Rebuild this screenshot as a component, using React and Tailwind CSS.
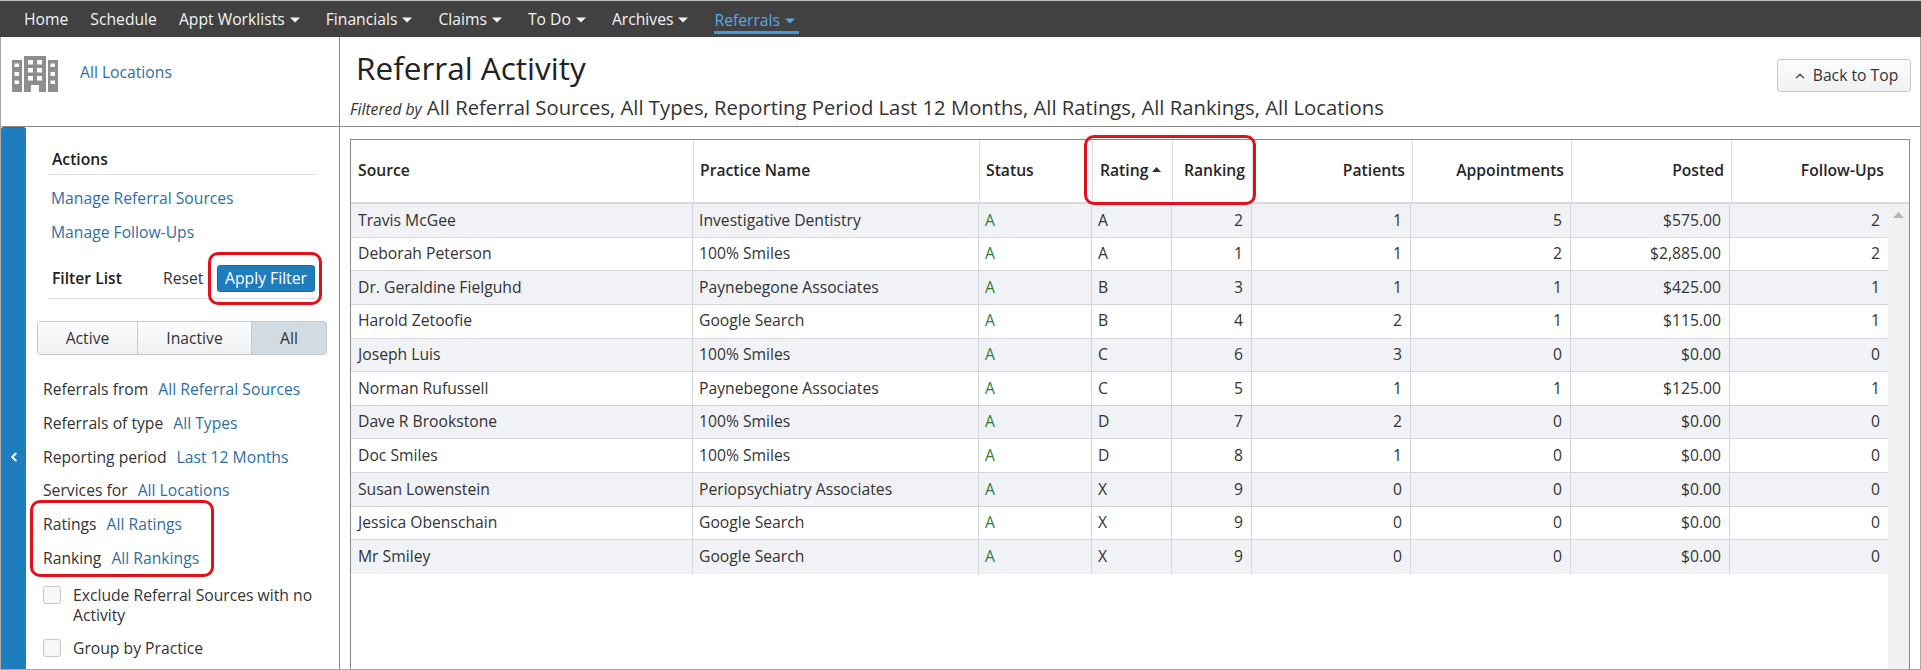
import React from "react";
import { ChevronLeft, ChevronUp } from "lucide-react";

const rows = [
  ["Travis McGee", "Investigative Dentistry", "A", "A", "2", "1", "5", "$575.00", "2"],
  ["Deborah Peterson", "100% Smiles", "A", "A", "1", "1", "2", "$2,885.00", "2"],
  ["Dr. Geraldine Fielguhd", "Paynebegone Associates", "A", "B", "3", "1", "1", "$425.00", "1"],
  ["Harold Zetoofie", "Google Search", "A", "B", "4", "2", "1", "$115.00", "1"],
  ["Joseph Luis", "100% Smiles", "A", "C", "6", "3", "0", "$0.00", "0"],
  ["Norman Rufussell", "Paynebegone Associates", "A", "C", "5", "1", "1", "$125.00", "1"],
  ["Dave R Brookstone", "100% Smiles", "A", "D", "7", "2", "0", "$0.00", "0"],
  ["Doc Smiles", "100% Smiles", "A", "D", "8", "1", "0", "$0.00", "0"],
  ["Susan Lowenstein", "Periopsychiatry Associates", "A", "X", "9", "0", "0", "$0.00", "0"],
  ["Jessica Obenschain", "Google Search", "A", "X", "9", "0", "0", "$0.00", "0"],
  ["Mr Smiley", "Google Search", "A", "X", "9", "0", "0", "$0.00", "0"],
];

function Caret({ className }) {
  return (
    <svg width="10" height="6" viewBox="0 0 10 6" className={className}>
      <path d="M0 0.5H10L5 5.5Z" fill="currentColor" />
    </svg>
  );
}

function NavItem({ label, menu, active }) {
  return (
    <div className={active ? "flex items-center gap-[5px] h-[24px] pr-[4px] border-b-[3px] border-[#3f9bdc] text-[#58a8e6]" : "flex items-center gap-[5px] h-[20px] text-[#f4f4f4]"}>
      <span>{label}</span>
      {menu && <Caret className={active ? "" : "mr-[4px]"} />}
    </div>
  );
}

function Filter({ label, value }) {
  return (
    <div className="h-[20px] leading-[20px] flex gap-[10px]">
      <span>{label}</span>
      <span className="text-[#2f6f9f]">{value}</span>
    </div>
  );
}

function Building() {
  return (
    <svg width="46" height="37" viewBox="0 0 46 37" className="text-[#8e8e8e]">
      <path
        fillRule="evenodd"
        fill="currentColor"
        d="M0 4H10V36H0Z M2.5 7.5V11H7V7.5Z M2.5 16V20H7V16Z M2.5 24.5V28H7V24.5Z M12 0H34V36H27V29H19V36H12Z M16 4V8.5H21V4Z M25 4V8.5H30V4Z M16 12V16.5H21V12Z M25 12V16.5H30V12Z M16 20V24.5H21V20Z M25 20V24.5H30V20Z M36 4H46V36H36Z M38.5 7.5V11H43V7.5Z M38.5 16V20H43V16Z M38.5 24.5V28H43V24.5Z"
      />
    </svg>
  );
}

function Sidebar() {
  return (
    <aside className="flex flex-1 min-h-0">
      <div className="w-[25px] rounded-t-[3px] bg-[#1e7dbd] border-t border-[#2a6e9c] pt-[322px] flex justify-center shrink-0">
        <ChevronLeft size={14} strokeWidth={3.5} className="text-white" />
      </div>
      <div className="flex-1 min-w-0">
        <div className="ml-[22px] mr-[23px] pt-[22px] pb-[5px] border-b border-[#dcdee1] pl-[4px] leading-[20px] font-semibold text-[#222]">Actions</div>
        <div className="ml-[25px] mt-[13px] leading-[20px] text-[#2f6f9f]">Manage Referral Sources</div>
        <div className="ml-[25px] mt-[14px] leading-[20px] text-[#2f6f9f]">Manage Follow-Ups</div>
        <div className="ml-[22px] mr-[23px] mt-[23px] pb-[6px] border-b border-[#dcdee1] flex items-center">
          <span className="ml-[4px] font-semibold text-[#222] w-[111px]">Filter List</span>
          <span className="w-[54px]">Reset</span>
          <button className="w-[98px] h-[27px] rounded-[3px] bg-[#1f7dbe] border border-[#1b6ba3] text-white">Apply Filter</button>
        </div>
        <div className="ml-[11px] mr-[12px] mt-[22px] h-[34px] grid grid-cols-[100px_114px_1fr] rounded-[3px] border border-[#c4c8cc] overflow-hidden text-center leading-[33px]">
          <div className="bg-linear-to-b from-[#fcfdfd] to-[#eef0f2] border-r border-[#c4c8cc]">Active</div>
          <div className="bg-linear-to-b from-[#fcfdfd] to-[#eef0f2] border-r border-[#c4c8cc]">Inactive</div>
          <div className="bg-[#d2dae2]">All</div>
        </div>
        <div className="ml-[17px] mt-[24px] flex flex-col gap-[13.8px]">
          <Filter label="Referrals from" value="All Referral Sources" />
          <Filter label="Referrals of type" value="All Types" />
          <Filter label="Reporting period" value="Last 12 Months" />
          <Filter label="Services for" value="All Locations" />
          <Filter label="Ratings" value="All Ratings" />
          <Filter label="Ranking" value="All Rankings" />
        </div>
        <div className="ml-[17px] mr-[8px] mt-[17px] flex gap-[12px] leading-[20px]">
          <span className="mt-[1px] w-[18px] h-[18px] rounded-[3px] border border-[#c4c8cc] bg-[#f7f8fa] shrink-0" />
          <span>Exclude Referral Sources with no Activity</span>
        </div>
        <div className="ml-[17px] mt-[13px] flex gap-[12px] leading-[20px]">
          <span className="mt-[1px] w-[18px] h-[18px] rounded-[3px] border border-[#c4c8cc] bg-[#f7f8fa] shrink-0" />
          <span>Group by Practice</span>
        </div>
      </div>
    </aside>
  );
}

const headCols = "grid grid-cols-[342px_286px_113px_80px_80px_160px_159px_160px_178px]";
const bodyCols = "grid grid-cols-[341px_286px_113px_80px_80px_159px_160px_159px_159px]";

function HeadCell({ children, right, first, pr, wide }) {
  return (
    <div className={`flex items-center ${right ? "justify-end" : ""} ${first ? "" : "border-l border-[#dcdee1]"} ${first || wide ? "pl-[7px]" : "pl-[6px]"} ${pr ? "pr-[25px]" : "pr-[7px]"}`}>
      {children}
    </div>
  );
}

function DataTable() {
  return (
    <div className="flex-1 min-h-0 flex flex-col mt-[12px] ml-[10px] mr-[10px] border border-b-0 border-[#8a8a8a]">
      <div className={`${headCols} h-[62px] font-semibold text-[#262626] border-b-[2px] border-[#d8dadd] box-content`}>
        <HeadCell first>Source</HeadCell>
        <HeadCell>Practice Name</HeadCell>
        <HeadCell>Status</HeadCell>
        <HeadCell wide>
          <span className="flex items-center gap-[4px]">
            Rating
            <svg width="9" height="5" viewBox="0 0 9 5" className="mb-[3px]"><path d="M0 5L4.5 0L9 5Z" fill="#333" /></svg>
          </span>
        </HeadCell>
        <HeadCell right>Ranking</HeadCell>
        <HeadCell right>Patients</HeadCell>
        <HeadCell right>Appointments</HeadCell>
        <HeadCell right>Posted</HeadCell>
        <HeadCell right pr>Follow-Ups</HeadCell>
      </div>
      <div className="flex-1 min-h-0 flex">
        <div className="flex-1 min-w-0">
          {rows.map((r, i) => (
            <div key={r[0]} className={`${bodyCols} h-[33.64px] ${i < rows.length - 1 ? "border-b border-[#d3d6da]" : ""} ${i % 2 === 0 ? "bg-[#f0f2f5]" : "bg-white"}`}>
              {r.map((c, j) => (
                <div
                  key={j}
                  className={`flex items-center ${j === 0 ? "pl-[7px]" : "pl-[6px]"} ${j > 3 ? "justify-end pr-[8px]" : "pr-[6px]"} ${j === 0 ? "" : "border-l border-[#d3d6da]"} ${j === 2 ? "text-[#2a8038]" : "text-[#333]"}`}
                >
                  {c}
                </div>
              ))}
            </div>
          ))}
        </div>
        <div className="w-[21px] bg-[#f1f1f1] shrink-0 flex justify-center pt-[8px]">
          <svg width="11" height="6" viewBox="0 0 11 6"><path d="M0 6L5.5 0L11 6Z" fill="#b4b4b4" /></svg>
        </div>
      </div>
    </div>
  );
}

export default function App() {
  return (
    <div className="relative w-[1921px] h-[670px] overflow-hidden bg-white text-[15.7px] text-[#333] flex flex-col font-['Open_Sans',sans-serif]">
      <nav className="h-[37px] border-t border-[#bdbdbd] bg-[#414141] flex items-start gap-[22px] pt-[9px] pl-[24px] shrink-0">
        <NavItem label="Home" />
        <NavItem label="Schedule" />
        <NavItem label="Appt Worklists" menu />
        <NavItem label="Financials" menu />
        <NavItem label="Claims" menu />
        <NavItem label="To Do" menu />
        <NavItem label="Archives" menu />
        <NavItem label="Referrals" menu active />
      </nav>
      <div className="flex-1 min-h-0 flex border-l border-r border-b border-[#a8a8a8]">
        <div className="w-[339px] shrink-0 flex flex-col border-r border-[#8a8a8a]">
          <div className="h-[90px] shrink-0 border-b border-[#8a8a8a] flex items-start pt-[19px] pl-[11px]">
            <Building />
            <span className="ml-[22px] mt-[6px] leading-[20px] text-[#2f6f9f]">All Locations</span>
          </div>
          <Sidebar />
        </div>
        <div className="flex-1 min-w-0 flex flex-col">
          <div className="h-[90px] shrink-0 border-b border-[#8a8a8a] flex justify-between">
            <div className="pl-[10px]">
              <h1 className="ml-[6px] mt-[10px] text-[31.5px] leading-[42px] font-normal text-[#222]">Referral Activity</h1>
              <div className="mt-[6px] flex items-baseline gap-[5px] leading-[24px]">
                <span className="italic">Filtered by</span>
                <span className="text-[20.25px] text-[#333]">All Referral Sources, All Types, Reporting Period Last 12 Months, All Ratings, All Rankings, All Locations</span>
              </div>
            </div>
            <button className="mt-[22px] mr-[9px] w-[134px] h-[33px] rounded-[3px] border border-[#c4c8cc] bg-linear-to-b from-[#fcfdfd] to-[#eef0f2] flex items-center justify-center gap-[6px] pl-[3px]">
              <ChevronUp size={14} strokeWidth={2.5} className="text-[#555]" />
              Back to Top
            </button>
          </div>
          <DataTable />
        </div>
      </div>
      <div className="absolute left-[208px] top-[252px] w-[114px] h-[53px] rounded-[10px] border-[3px] border-[#e2101a]" />
      <div className="absolute left-[30px] top-[500px] w-[184px] h-[77px] rounded-[10px] border-[3px] border-[#e2101a]" />
      <div className="absolute left-[1084px] top-[135px] w-[172px] h-[70px] rounded-[10px] border-[3px] border-[#e2101a]" />
    </div>
  );
}
